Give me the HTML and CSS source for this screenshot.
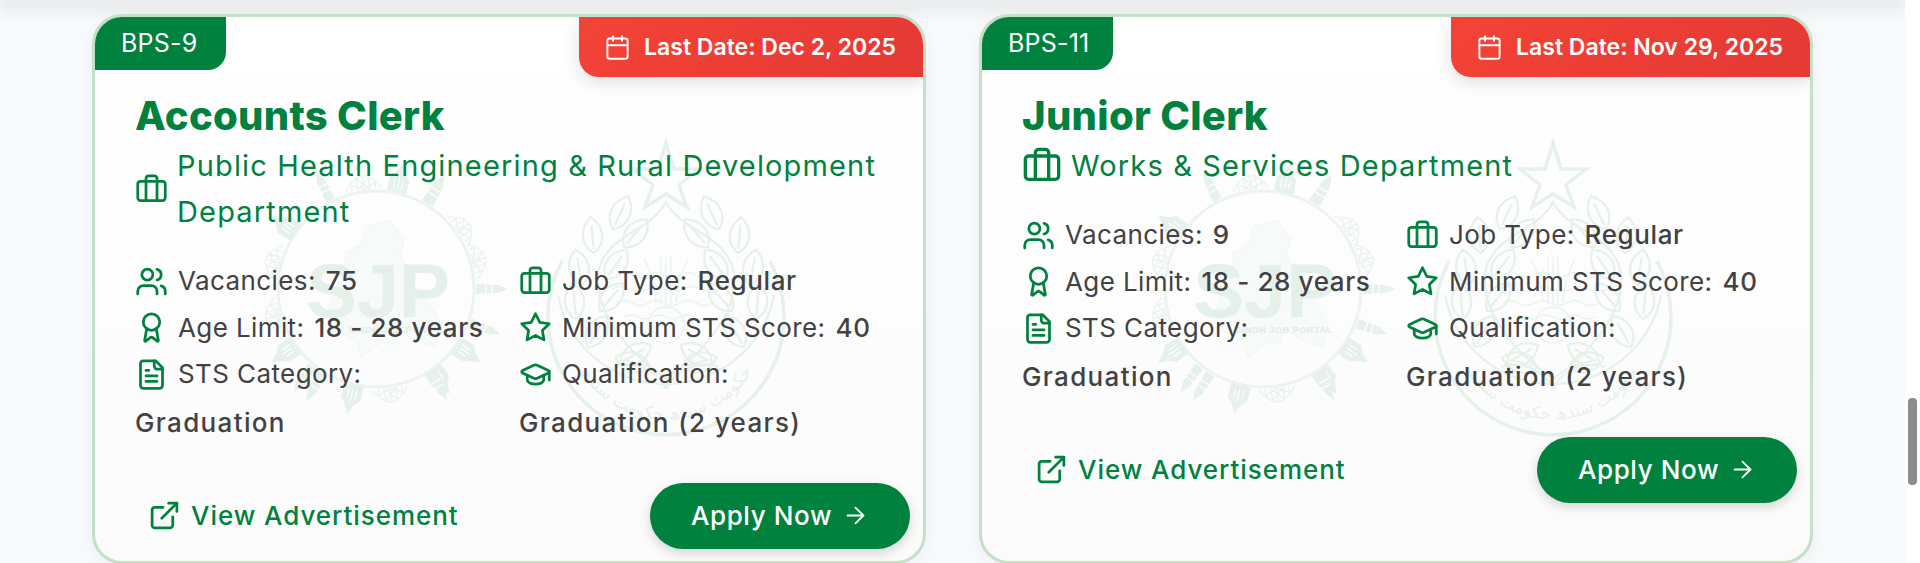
FILE: index.html
```html
<!DOCTYPE html>
<html lang="en">
<head>
    <meta charset="UTF-8">
    <title>Jobs</title>
    <link rel="stylesheet" href="styles.css">
</head>
<body>
    <svg class="sprites" width="0" height="0">
        <defs>
            <symbol id="i-brief" viewBox="0 0 24 24"><path d="M16 20V4a2 2 0 0 0-2-2h-4a2 2 0 0 0-2 2v16"/><rect x="2" y="6" width="20" height="14" rx="2"/></symbol>
            <symbol id="i-users" viewBox="0 0 24 24"><path d="M16 21v-2a4 4 0 0 0-4-4H6a4 4 0 0 0-4 4v2"/><circle cx="9" cy="7" r="4"/><path d="M22 21v-2a4 4 0 0 0-3-3.87"/><path d="M16 3.13a4 4 0 0 1 0 7.75"/></symbol>
            <symbol id="i-award" viewBox="0 0 24 24"><path d="m15.477 12.89 1.515 8.526a.5.5 0 0 1-.81.47l-3.58-2.687a1 1 0 0 0-1.197 0l-3.586 2.686a.5.5 0 0 1-.81-.469l1.514-8.526"/><circle cx="12" cy="8" r="6"/></symbol>
            <symbol id="i-star" viewBox="0 0 24 24"><polygon points="12 2 15.09 8.26 22 9.27 17 14.14 18.18 21.02 12 17.77 5.82 21.02 7 14.14 2 9.27 8.91 8.26 12 2"/></symbol>
            <symbol id="i-file" viewBox="0 0 24 24"><path d="M15 2H6a2 2 0 0 0-2 2v16a2 2 0 0 0 2 2h12a2 2 0 0 0 2-2V7Z"/><path d="M14 2v4a2 2 0 0 0 2 2h4"/><path d="M10 9H8"/><path d="M16 13H8"/><path d="M16 17H8"/></symbol>
            <symbol id="i-cap" viewBox="0 0 24 24"><path d="M21.42 10.922a1 1 0 0 0-.019-1.838L12.83 5.18a2 2 0 0 0-1.66 0L2.6 9.08a1 1 0 0 0 0 1.832l8.57 3.908a2 2 0 0 0 1.66 0z"/><path d="M22 10v6"/><path d="M6 12.5V16a6 3 0 0 0 12 0v-3.5"/></symbol>
            <symbol id="i-cal" viewBox="0 0 24 24"><path d="M8 2v4"/><path d="M16 2v4"/><rect x="3" y="4" width="18" height="18" rx="2"/><path d="M3 10h18"/></symbol>
            <symbol id="i-link" viewBox="0 0 24 24"><path d="M15 3h6v6"/><path d="M10 14 21 3"/><path d="M18 13v6a2 2 0 0 1-2 2H5a2 2 0 0 1-2-2V8a2 2 0 0 1 2-2h6"/></symbol>
            <symbol id="i-arrow" viewBox="0 0 24 24"><path d="M5 12h14"/><path d="m12 5 7 7-7 7"/></symbol>

            <!-- watermark pieces -->
            <g id="m-tower"><path d="M-5 -100 L-4 -122 L0 -132 L4 -122 L5 -100 Z"/><path class="wm-cut" d="M-5 -110H5M-5 -116H5"/></g>
            <g id="m-house"><path d="M-10 -99 V-113 L-5 -118 L0 -128 L5 -118 L10 -113 V-99 Z"/><path class="wm-cut" d="M-4 -103V-112M0 -103V-115M4 -103V-112"/></g>
            <g id="m-bridge"><path class="wm-thin" d="M-18 -100 Q0 -128 18 -100 M-12 -106V-100 M-6 -112V-100 M0 -114V-100 M6 -112V-100 M12 -106V-100 M-12 -106L0 -100L12 -106 M-6 -112L6 -100M6 -112L-6 -100"/></g>
            <path id="m-leaf" class="wm-line" d="M0 0C13 -9 13 -25 0 -36C-13 -25 -13 -9 0 0ZM0 -4V-28"/>
            <g id="m-wreath">
                <use href="#m-leaf" transform="translate(-53 -88) rotate(25)"/>
                <use href="#m-leaf" transform="translate(-72 -64) rotate(-5)"/>
                <use href="#m-leaf" transform="translate(-42 -70) rotate(40)"/>
                <use href="#m-leaf" transform="translate(-84 -32) rotate(-10)"/>
                <use href="#m-leaf" transform="translate(-60 -38) rotate(35)"/>
                <use href="#m-leaf" transform="translate(-90 2) rotate(-5)"/>
                <use href="#m-leaf" transform="translate(-66 -6) rotate(40)"/>
                <use href="#m-leaf" transform="translate(-78 30) rotate(30)"/>
                <use href="#m-leaf" transform="translate(-46 46) rotate(60)"/>
                <use href="#m-leaf" transform="translate(-16 50) rotate(-75)"/>
            </g>
            <g id="watermark">
                <g transform="translate(281 272)">
                    <circle class="wm-ring" r="98"/>
                    <path class="wm-map" transform="translate(3 2) scale(.62 .88)" d="M-20 -74 L18 -80 L40 -60 L34 -40 L46 -22 L40 -4 L66 -2 L100 36 L92 64 L60 56 L30 44 L22 60 L4 58 L-28 76 L-38 56 L-78 42 L-82 26 L-70 -4 L-56 -16 L-54 -44 L-30 -52 Z"/>
                    <text class="wm-sjp" x="2" y="28" text-anchor="middle">SJP</text>
                    <text class="wm-small" x="21" y="44" text-anchor="middle">SINDH JOB PORTAL</text>
                    <use href="#m-tower" transform="rotate(-27)"/>
                    <use href="#m-bridge" transform="rotate(-7)"/>
                    <use href="#m-house" transform="rotate(12)"/>
                    <use href="#m-tower" transform="rotate(30) translate(3 0)"/>
                    <use href="#m-tower" transform="rotate(33) translate(-5 0)"/>
                    <use href="#m-bridge" transform="rotate(55)"/>
                    <use href="#m-bridge" transform="rotate(74)"/>
                    <use href="#m-tower" transform="rotate(90)"/>
                    <use href="#m-tower" transform="rotate(110)"/>
                    <use href="#m-house" transform="rotate(125)"/>
                    <use href="#m-house" transform="rotate(145)"/>
                    <use href="#m-bridge" transform="rotate(172)"/>
                    <use href="#m-tower" transform="rotate(150) translate(-6 0)"/>
                    <use href="#m-house" transform="rotate(193)"/>
                    <use href="#m-tower" transform="rotate(212)"/>
                    <use href="#m-tower" transform="rotate(216) translate(6 0)"/>
                    <use href="#m-house" transform="rotate(235)"/>
                    <use href="#m-bridge" transform="rotate(255)"/>
                    <use href="#m-bridge" transform="rotate(285)"/>
                    <use href="#m-house" transform="rotate(305)"/>
                </g>
                <g transform="translate(571 300)">
                    <path class="wm-line wm-thick" d="M-104 -56A118 118 0 1 0 104 -56"/>
                    <path class="wm-line" d="M-108 -22A110 110 0 0 0 108 -22"/>
                    <path class="wm-line" d="M0 -115C-16 -84 -60 -84 -68 -44C-72 -6 -40 34 0 62C40 34 72 -6 68 -44C60 -84 16 -84 0 -115Z"/>
                    <use href="#m-wreath"/>
                    <use href="#m-wreath" transform="scale(-1 1)"/>
                    <path class="wm-thin" d="M-50 -42q8 -5 16 0t16 0t16 0t16 0t16 0t16 0M-54 -28q9 -5 18 0t18 0t18 0t18 0t18 0t18 0M-50 -14q8 -5 16 0t16 0t16 0t16 0t16 0t16 0M-42 0q7 -4 14 0t14 0t14 0t14 0t14 0t14 0"/>
                    <path class="wm-thin" d="M0 -8V-60M-10 -14Q-12 -40 -22 -58M10 -14Q12 -40 22 -58M-5 -12V-62M5 -12V-62"/>
                    <circle class="wm-thin" cx="0" cy="8" r="18"/>
                    <path class="wm-line" d="M0 72C-10 50 -36 44 -52 50M0 72C10 50 36 44 52 50"/>
                    <path id="seal-arc" class="wm-none" d="M-98 26A101 101 0 0 0 98 26"/>
                    <text class="wm-arabic"><textPath href="#seal-arc" startOffset="50%" text-anchor="middle">حکومت سندھ حکومت سندھ</textPath></text>
                    <polygon class="wm-line wm-thick" points="0,-174 8,-148 33,-148 13,-132 21,-110 0,-123 -21,-110 -13,-132 -33,-148 -8,-148"/>
                </g>
            </g>
        </defs>
    </svg>

    <main class="page">
        <div class="top-shadow"></div>
        <div class="jobs">

            <article class="card">
                <svg class="watermark" viewBox="0 0 828 545"><use href="#watermark"/></svg>
                <span class="grade">BPS-9</span>
                <span class="last-date"><svg class="icon icon-date"><use href="#i-cal"/></svg>Last Date: Dec 2, 2025</span>
                <div class="card-body">
                    <h2 class="title">Accounts Clerk</h2>
                    <p class="dept"><svg class="icon icon-small"><use href="#i-brief"/></svg><span>Public Health Engineering &amp; Rural Development Department</span></p>
                    <div class="stats">
                        <div class="stat"><svg class="icon"><use href="#i-users"/></svg><span>Vacancies:</span><strong>75</strong></div>
                        <div class="stat"><svg class="icon"><use href="#i-brief"/></svg><span>Job Type:</span><strong>Regular</strong></div>
                        <div class="stat"><svg class="icon"><use href="#i-award"/></svg><span>Age Limit:</span><strong>18 - 28 years</strong></div>
                        <div class="stat"><svg class="icon"><use href="#i-star"/></svg><span>Minimum STS Score:</span><strong>40</strong></div>
                        <div class="stat"><svg class="icon"><use href="#i-file"/></svg><span>STS Category:</span><strong class="block">Graduation</strong></div>
                        <div class="stat"><svg class="icon"><use href="#i-cap"/></svg><span>Qualification:</span><strong class="block">Graduation (2 years)</strong></div>
                    </div>
                </div>
                <div class="actions">
                    <a class="view-ad" href="#"><svg class="icon"><use href="#i-link"/></svg>View Advertisement</a>
                    <a class="apply" href="#">Apply Now<svg class="icon icon-arrow"><use href="#i-arrow"/></svg></a>
                </div>
            </article>

            <article class="card">
                <svg class="watermark" viewBox="0 0 828 545"><use href="#watermark"/></svg>
                <span class="grade">BPS-11</span>
                <span class="last-date"><svg class="icon icon-date"><use href="#i-cal"/></svg>Last Date: Nov 29, 2025</span>
                <div class="card-body">
                    <h2 class="title">Junior Clerk</h2>
                    <p class="dept"><svg class="icon icon-large"><use href="#i-brief"/></svg><span>Works &amp; Services Department</span></p>
                    <div class="stats">
                        <div class="stat"><svg class="icon"><use href="#i-users"/></svg><span>Vacancies:</span><strong>9</strong></div>
                        <div class="stat"><svg class="icon"><use href="#i-brief"/></svg><span>Job Type:</span><strong>Regular</strong></div>
                        <div class="stat"><svg class="icon"><use href="#i-award"/></svg><span>Age Limit:</span><strong>18 - 28 years</strong></div>
                        <div class="stat"><svg class="icon"><use href="#i-star"/></svg><span>Minimum STS Score:</span><strong>40</strong></div>
                        <div class="stat"><svg class="icon"><use href="#i-file"/></svg><span>STS Category:</span><strong class="block">Graduation</strong></div>
                        <div class="stat"><svg class="icon"><use href="#i-cap"/></svg><span>Qualification:</span><strong class="block">Graduation (2 years)</strong></div>
                    </div>
                </div>
                <div class="actions">
                    <a class="view-ad" href="#"><svg class="icon"><use href="#i-link"/></svg>View Advertisement</a>
                    <a class="apply" href="#">Apply Now<svg class="icon icon-arrow"><use href="#i-arrow"/></svg></a>
                </div>
            </article>

        </div>
    </main>

    <div class="scrollbar"><div class="thumb"></div></div>
</body>
</html>
```

FILE: styles.css
```css
*{
    margin: 0;
    padding: 0;
    box-sizing: border-box;
}

html, body{
    height: 563px;
    overflow: hidden;
}

body{
    display: flex;
    background-color: #ffffff;
    font-family: 'Inter', 'Liberation Sans', sans-serif;
    color: #424242;
}

.sprites{
    position: absolute;
}

.page{
    flex: 1;
    overflow: hidden;
    background-color: #f9fafc;
}

.top-shadow{
    height: 0;
    box-shadow: 0 2px 18px 3px rgba(0, 0, 0, 0.22);
}

.jobs{
    display: grid;
    grid-template-columns: 834px 834px;
    justify-content: center;
    gap: 53px;
    padding-top: 14px;
}

/* card */
.card{
    position: relative;
    height: 550px;
    overflow: hidden;
    border: 3px solid #c4e0c6;
    border-radius: 30px;
    background: linear-gradient(180deg, #ffffff, #fbfbfb);
    box-shadow: 0 4px 20px rgba(30, 40, 80, 0.05);
}

.watermark{
    position: absolute;
    left: 0;
    top: 0;
    width: 828px;
    height: 545px;
    fill: #e6f1eb;
    stroke: none;
}

.wm-line{
    fill: none;
    stroke: #e6f1eb;
    stroke-width: 2.2;
}

.wm-thin{
    fill: none;
    stroke: #e9f3ee;
    stroke-width: 1.3;
}

.wm-thick{
    stroke-width: 3.5;
}

.wm-ring{
    fill: none;
    stroke: #ebf4ef;
    stroke-width: 3;
}

.wm-cut{
    fill: none;
    stroke: #ffffff;
    stroke-width: 1.2;
}

.wm-map{
    fill: #f6faf8;
    stroke: #ecf4f0;
    stroke-width: 1;
}

.wm-none{
    fill: none;
    stroke: none;
}

.wm-sjp{
    font-family: 'Liberation Sans', sans-serif;
    font-size: 76px;
    font-weight: 700;
    fill: #e4f0ea;
}

.wm-small{
    font-family: 'Liberation Sans', sans-serif;
    font-size: 9px;
    font-weight: 700;
    letter-spacing: 0.6px;
    fill: #dfece5;
}

.wm-arabic{
    font-family: 'DejaVu Sans', sans-serif;
    font-size: 17px;
    fill: #e6f1eb;
}

.icon{
    flex: none;
    width: 33px;
    height: 33px;
    fill: none;
    stroke: #00813e;
    stroke-width: 2;
    stroke-linecap: round;
    stroke-linejoin: round;
}

/* corner badges */
.grade{
    position: absolute;
    left: 0;
    top: 0;
    width: 131px;
    height: 53px;
    padding-left: 26px;
    line-height: 53px;
    font-size: 25px;
    letter-spacing: 0.2px;
    color: #ffffff;
    background-color: #00813e;
    border-bottom-right-radius: 18px;
}

.last-date{
    position: absolute;
    right: 0;
    top: 0;
    display: flex;
    align-items: center;
    gap: 13px;
    height: 60px;
    padding: 0 27px 0 25px;
    font-size: 23px;
    font-weight: 600;
    color: #ffffff;
    background: linear-gradient(135deg, #f44336, #e53935);
    border-bottom-left-radius: 20px;
    box-shadow: 0 6px 18px rgba(0, 0, 0, 0.12);
}

.icon-date{
    width: 27px;
    height: 27px;
    stroke: #ffffff;
    stroke-width: 1.7;
}

/* body */
.card-body{
    position: relative;
    padding: 76px 40px 0;
}

.title{
    line-height: 46px;
    font-size: 40px;
    font-weight: 800;
    letter-spacing: 0.3px;
    color: #00813e;
}

.dept{
    display: flex;
    align-items: center;
    gap: 9px;
    margin-top: 4px;
    line-height: 46px;
    font-size: 29px;
    letter-spacing: 1.15px;
    color: #00813e;
}

.dept .icon-small{
    width: 33px;
    height: 33px;
}

.dept .icon-large{
    width: 40px;
    height: 40px;
}

.stats{
    display: grid;
    grid-template-columns: 1fr 1fr;
    column-gap: 20px;
    margin-top: 23px;
}

.stat{
    display: flex;
    flex-wrap: wrap;
    align-items: center;
    column-gap: 10px;
    line-height: 46.5px;
    font-size: 26px;
    letter-spacing: 0.4px;
}

.stat strong{
    font-weight: 500;
    letter-spacing: 0.6px;
}

.stat .block{
    flex-basis: 100%;
    line-height: 50px;
    letter-spacing: 1.35px;
}

/* bottom row */
.actions{
    position: relative;
    display: flex;
    justify-content: space-between;
    align-items: center;
    margin-top: 35px;
    padding: 0 13px 0 53px;
}

.view-ad{
    display: flex;
    align-items: center;
    gap: 10px;
    font-size: 26px;
    font-weight: 500;
    letter-spacing: 0.95px;
    text-decoration: none;
    color: #00813e;
}

.apply{
    display: flex;
    align-items: center;
    justify-content: center;
    gap: 10px;
    width: 260px;
    height: 66px;
    font-size: 26px;
    font-weight: 500;
    letter-spacing: 0.6px;
    text-decoration: none;
    color: #ffffff;
    background-color: #00813e;
    border-radius: 33px;
    box-shadow: 0 4px 12px rgba(0, 0, 0, 0.16);
}

.icon-arrow{
    width: 27px;
    height: 27px;
    stroke: #ffffff;
    stroke-width: 1.6;
}

/* scrollbar */
.scrollbar{
    flex: none;
    width: 15px;
    padding: 398px 3px 0;
    background-color: #ffffff;
}

.thumb{
    height: 87px;
    background-color: #8c8c8c;
    border-radius: 4px;
}
```
